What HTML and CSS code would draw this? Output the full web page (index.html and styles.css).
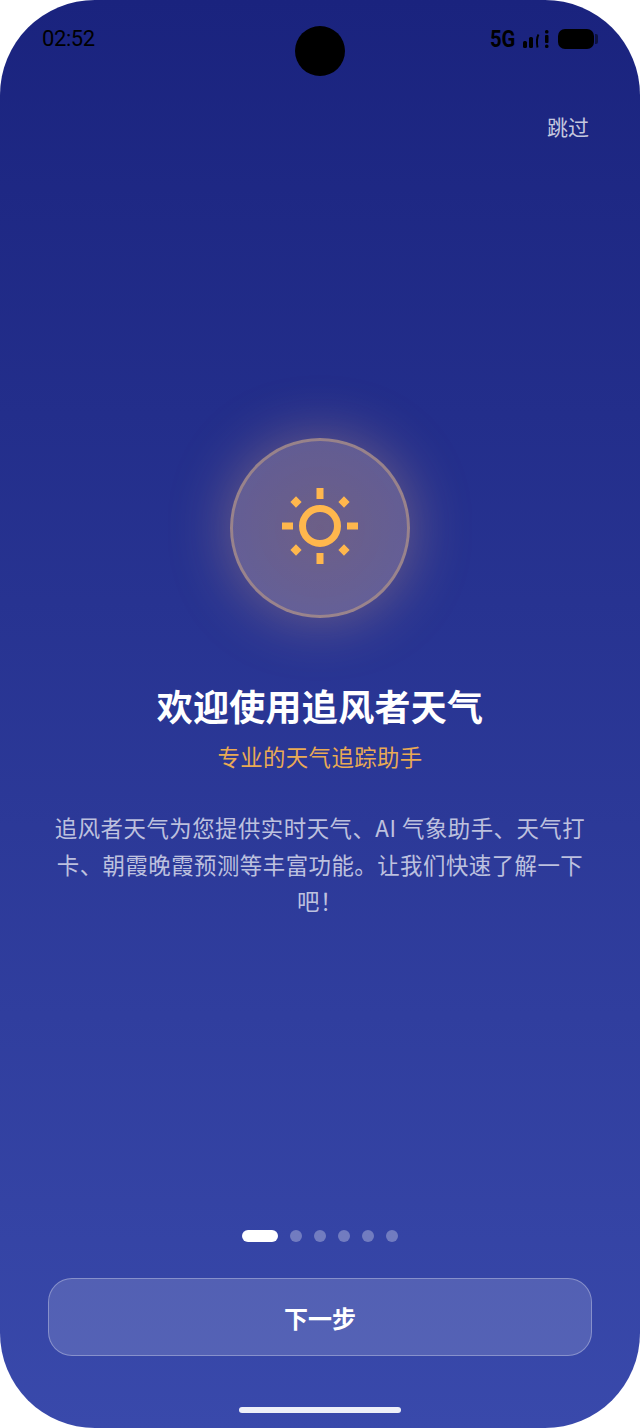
FILE: index.html
```html
<!DOCTYPE html>
<html lang="zh-CN">
<head>
    <meta charset="UTF-8">
    <meta name="viewport" content="width=device-width, initial-scale=1.0">
    <title>追风者天气</title>
    <link rel="stylesheet" href="styles.css">
</head>
<body>
    <div class="phone">
        <div class="camera"></div>
        <div class="status-bar">
            <span class="time">02:52</span>
            <div class="status-right">
                <span class="network">5G</span>
                <svg class="signal" width="27" height="18" viewBox="0 0 27 18">
                    <rect x="0" y="11" width="4" height="7" rx="1.5"/>
                    <rect x="6" y="7" width="4" height="11" rx="1.5"/>
                    <path d="M15.5 4.5Q13 9 14.5 17.5" fill="none" stroke="#000" stroke-width="2"/>
                    <rect x="22" y="0" width="3.5" height="3.5" rx="1.5"/>
                    <rect x="22" y="5" width="3.5" height="8" rx="1"/>
                    <rect x="22" y="14.5" width="3.5" height="3.5" rx="1.5"/>
                </svg>
                <div class="battery"></div>
                <div class="battery-cap"></div>
            </div>
        </div>
        <div class="skip-row">
            <span class="skip">跳过</span>
        </div>
        <div class="hero">
            <div class="icon-circle">
                <svg class="sun" width="80" height="80" viewBox="0 0 80 80" fill="none" stroke="#ffb74d" stroke-width="7">
                    <circle cx="40" cy="40" r="17.5"/>
                    <path d="M40 2v11M40 67v11M2 40h11M67 40h11"/>
                    <path d="M13.2 13.2l5.6 5.6M66.8 13.2l-5.6 5.6M13.2 66.8l5.6-5.6M66.8 66.8l-5.6-5.6" stroke-width="8"/>
                </svg>
            </div>
            <h1>欢迎使用追风者天气</h1>
            <p class="subtitle">专业的天气追踪助手</p>
            <p class="desc">追风者天气为您提供实时天气、AI 气象助手、天气打卡、朝霞晚霞预测等丰富功能。让我们快速了解一下吧！</p>
        </div>
        <div class="dots">
            <span class="dot active"></span>
            <span class="dot"></span>
            <span class="dot"></span>
            <span class="dot"></span>
            <span class="dot"></span>
            <span class="dot"></span>
        </div>
        <button class="next-btn" type="button">下一步</button>
        <div class="home-bar"></div>
    </div>
</body>
</html>
```

FILE: styles.css
```css
* {
    box-sizing: border-box;
}
body {
    margin: 0;
    padding: 0;
    background-color: #ffffff;
    font-family: "Noto Sans CJK SC", Roboto, sans-serif;
}
.phone {
    position: relative;
    display: flex;
    flex-direction: column;
    width: 640px;
    height: 1428px;
    overflow: hidden;
    border-radius: 95px;
    background: linear-gradient(180deg, #1a237e 0%, #3949ab 100%);
}
.camera {
    position: absolute;
    top: 26px;
    left: 295px;
    width: 50px;
    height: 50px;
    border-radius: 50%;
    background-color: #000;
}
.status-bar {
    display: flex;
    justify-content: space-between;
    align-items: center;
    height: 38px;
    margin-top: 20px;
    padding: 0 42px;
    color: #000;
    font-family: Roboto, sans-serif;
}
.time {
    font-size: 22px;
    letter-spacing: -0.4px;
    line-height: 36px;
}
.status-right {
    display: flex;
    align-items: center;
}
.network {
    font-size: 23px;
    font-weight: 700;
    margin-right: 4px;
    transform: scaleX(0.88);
    transform-origin: left center;
}
.signal {
    margin-right: 8px;
}
.battery {
    width: 36px;
    height: 20px;
    border-radius: 7px;
    background-color: #000;
}
.battery-cap {
    width: 3px;
    height: 10px;
    margin-left: 1px;
    border-radius: 0 2px 2px 0;
    background-color: rgba(0, 0, 0, 0.5);
}
.skip-row {
    display: flex;
    justify-content: flex-end;
    margin-top: 52px;
    padding-right: 51px;
}
.skip {
    font-size: 21px;
    line-height: 32px;
    color: rgba(255, 255, 255, 0.75);
}
.hero {
    display: flex;
    flex-direction: column;
    align-items: center;
    flex: 1;
    padding: 0 48px;
    margin-top: 296px;
}
.icon-circle {
    display: flex;
    align-items: center;
    justify-content: center;
    width: 180px;
    height: 180px;
    margin-bottom: 62px;
    border: 3px solid rgba(255, 200, 120, 0.35);
    border-radius: 50%;
    background: radial-gradient(circle, rgba(255, 190, 120, 0.33) 0%, rgba(255, 215, 190, 0.27) 100%);
    box-shadow: 0 0 60px rgba(255, 183, 120, 0.35);
}
.sun {
    margin-bottom: 4px;
}
h1 {
    margin: 0;
    font-size: 36px;
    line-height: 50px;
    font-weight: 700;
    letter-spacing: 0.3px;
    color: #ffffff;
}
.subtitle {
    margin: 10px 0 0;
    font-size: 22.4px;
    line-height: 32px;
    letter-spacing: 0.4px;
    color: #ffb74d;
    opacity: 0.9;
}
.desc {
    margin: 37px 0 0;
    font-size: 22.4px;
    line-height: 36.6px;
    letter-spacing: 0.5px;
    text-align: center;
    color: rgba(255, 255, 255, 0.7);
}
.dots {
    display: flex;
    justify-content: center;
    gap: 12px;
    margin-bottom: 36px;
}
.dot {
    width: 12px;
    height: 12px;
    border-radius: 6px;
    background-color: rgba(255, 255, 255, 0.3);
}
.dot.active {
    width: 36px;
    background-color: #ffffff;
}
.next-btn {
    width: 544px;
    height: 78px;
    margin: 0 48px;
    border: 1.6px solid rgba(255, 255, 255, 0.3);
    border-radius: 24px;
    background-color: rgba(255, 255, 255, 0.15);
    color: #ffffff;
    font-family: inherit;
    font-size: 24px;
    font-weight: 700;
}
.home-bar {
    align-self: center;
    width: 162px;
    height: 6px;
    margin: 51px 0 15px;
    border-radius: 3px;
    background-color: #eef0f8;
}
```
